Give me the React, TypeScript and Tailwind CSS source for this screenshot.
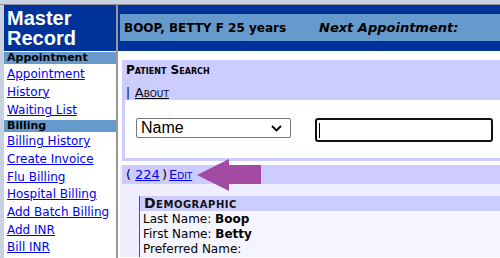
import React from 'react';

const linkCls = 'text-[#0000ee] underline block leading-[17.7px]';

const sideLinks = ['Billing History', 'Create Invoice', 'Flu Billing', 'Hospital Billing', 'Add Batch Billing', 'Add INR', 'Bill INR', 'Outside Lab'];

export default function App() {
  return (
    <div className="w-[500px] h-[258px] overflow-hidden bg-[#c9d1e1] pt-[4px] font-['DejaVu_Sans',sans-serif] text-[12px] text-black">
      <div className="flex border-t border-[#8a8f99] h-[300px]">
        {/* sidebar */}
        <div className="ml-[4px] w-[112px] shrink-0 bg-white">
          <div className="bg-[#003399] h-[46px] px-[3px] pt-[3px] text-white font-bold font-['Liberation_Sans',sans-serif] text-[20px] leading-[20px]">
            Master<br />Record
          </div>
          <div className="bg-[#6699cc] font-bold text-[11px] leading-[12px] px-[3px] mt-[1px]">Appointment</div>
          <div className="px-[3px] pt-[2px]">
            <a className={linkCls}>Appointment<br />History</a>
            <a className={`${linkCls} mt-[1px]`}>Waiting List</a>
          </div>
          <div className="bg-[#6699cc] font-bold text-[11px] leading-[12px] px-[3px]">Billing</div>
          <div className="px-[3px] pt-[1px]">
            {sideLinks.map((l) => (
              <a key={l} className={linkCls}>{l}</a>
            ))}
          </div>
        </div>
        <div className="w-[2px] shrink-0 bg-[#999999]" />

        {/* main */}
        <div className="flex-1 min-w-0 bg-white">
          <div className="bg-[#003399] h-[46px] pt-[9px] pl-[2px]">
            <div className="bg-[#6699cc] h-[27px] flex items-center pl-[4px] font-bold text-[13px] whitespace-nowrap">
              <span className="w-[195px] shrink-0 text-[12px]">BOOP, BETTY F 25 years</span>
              <span className="italic">Next Appointment:</span>
            </div>
          </div>

          {/* patient search */}
          <div className="ml-[4px] mt-[9px] bg-[#ccccff] pt-[3px] pl-[3px] pb-[3px]">
            <div className="pl-[1px] font-bold text-[12px] leading-[14px] [font-variant:small-caps]">Patient Search</div>
            <div className="pl-[1px] mt-[9px] text-[12px] leading-[14px]">
              | <span className="underline [font-variant:small-caps] text-[13px] ml-[1px]">About</span>
            </div>
            <div className="bg-white h-[58px] flex items-start pt-[18px] pl-[11px] gap-[24px]">
              <div className="w-[155px] h-[20px] border border-[#767676] rounded-[2px] flex items-center justify-between pl-[4px] pr-[8px] font-['Liberation_Sans',sans-serif] text-[16px]">
                <span>Name</span>
                <svg width="11" height="7" viewBox="0 0 11 7"><path d="M1 1l4.5 4.5L10 1" fill="none" stroke="#000" strokeWidth="1.8" /></svg>
              </div>
              <div className="w-[178px] h-[24px] border-2 border-[#111] rounded-[3px] flex items-center pl-[2px]">
                <div className="w-[1px] h-[15px] bg-black" />
              </div>
            </div>
          </div>

          {/* record panel */}
          <div className="ml-[2px] mt-[4px] bg-[#eeeeff] pl-[2px]">
            <div className="relative bg-[#ccccff] h-[19px] flex items-center pl-[4px] text-[13px] whitespace-nowrap">
              <span>(</span>
              <a className="text-[#0000ee] underline ml-[4px]">224 </a>
              <span className="ml-[2px]">)</span>
              <a className="text-[#0000ee] underline ml-[2px] [font-variant:small-caps]">Edit</a>
              <svg className="absolute left-[75px] top-[-6px]" width="66" height="33" viewBox="0 0 66 33">
                <path d="M0 16 L32 0 L32 6 L64 6 L64 25 L32 25 L32 32 Z" fill="#a34ba3" />
              </svg>
            </div>
            <div className="pt-[12px] pl-[17px] pr-0">
              <div className="border-l border-[#555] bg-[#f5f5ff]">
                <div className="bg-[#ccccff] h-[15px] pl-[4px] font-bold text-[14px] tracking-[0.5px] leading-[15px] [font-variant:small-caps] text-[#111]">Demographic</div>
                <div className="pl-[3px] text-[12px] leading-[15px] pt-[1px]">
                  <div>Last Name: <b>Boop</b></div>
                  <div>First Name: <b>Betty</b></div>
                  <div>Preferred Name:</div>
                </div>
              </div>
            </div>
          </div>
        </div>
      </div>
    </div>
  );
}
